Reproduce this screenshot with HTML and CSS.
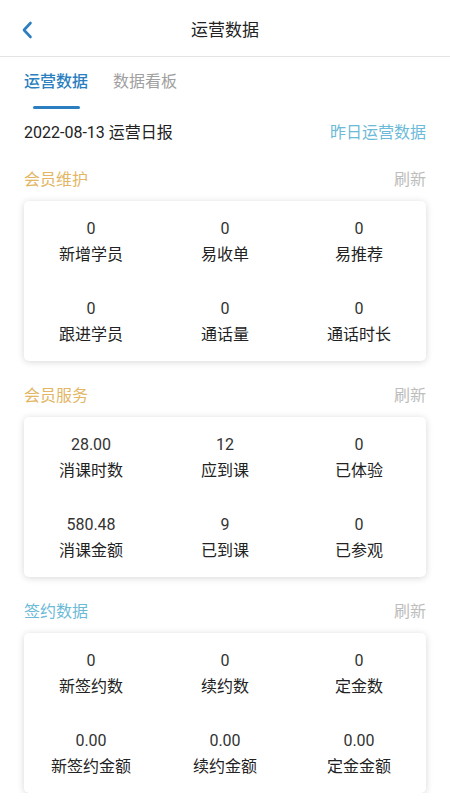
FILE: index.html
```html
<!DOCTYPE html>
<html lang="zh-CN">
<head>
    <meta charset="UTF-8">
    <meta name="viewport" content="width=device-width, initial-scale=1.0">
    <title>运营数据</title>
    <link rel="stylesheet" href="styles.css">
</head>
<body>
    <div class="navbar">
        <span class="back">
            <svg width="12" height="18" viewBox="0 0 12 18"><path d="M9.5 2 L3 9 L9.5 16" fill="none" stroke="#2b7fc0" stroke-width="2.6" stroke-linecap="round" stroke-linejoin="round"/></svg>
        </span>
        <span class="nav-title">运营数据</span>
    </div>

    <div class="page">
        <div class="tabs">
            <div class="tab active">运营数据</div>
            <div class="tab">数据看板</div>
        </div>

        <div class="date-row">
            <span class="date">2022-08-13 运营日报</span>
            <span class="yesterday">昨日运营数据</span>
        </div>

        <!-- 会员维护 -->
        <div class="section">
            <div class="section-head">
                <span class="section-title gold">会员维护</span>
                <span class="refresh">刷新</span>
            </div>
            <div class="card">
                <div class="item"><div class="num">0</div><div class="label">新增学员</div></div>
                <div class="item"><div class="num">0</div><div class="label">易收单</div></div>
                <div class="item"><div class="num">0</div><div class="label">易推荐</div></div>
                <div class="item"><div class="num">0</div><div class="label">跟进学员</div></div>
                <div class="item"><div class="num">0</div><div class="label">通话量</div></div>
                <div class="item"><div class="num">0</div><div class="label">通话时长</div></div>
            </div>
        </div>

        <!-- 会员服务 -->
        <div class="section">
            <div class="section-head">
                <span class="section-title gold">会员服务</span>
                <span class="refresh">刷新</span>
            </div>
            <div class="card">
                <div class="item"><div class="num">28.00</div><div class="label">消课时数</div></div>
                <div class="item"><div class="num">12</div><div class="label">应到课</div></div>
                <div class="item"><div class="num">0</div><div class="label">已体验</div></div>
                <div class="item"><div class="num">580.48</div><div class="label">消课金额</div></div>
                <div class="item"><div class="num">9</div><div class="label">已到课</div></div>
                <div class="item"><div class="num">0</div><div class="label">已参观</div></div>
            </div>
        </div>

        <!-- 签约数据 -->
        <div class="section">
            <div class="section-head">
                <span class="section-title blue">签约数据</span>
                <span class="refresh">刷新</span>
            </div>
            <div class="card">
                <div class="item"><div class="num">0</div><div class="label">新签约数</div></div>
                <div class="item"><div class="num">0</div><div class="label">续约数</div></div>
                <div class="item"><div class="num">0</div><div class="label">定金数</div></div>
                <div class="item"><div class="num">0.00</div><div class="label">新签约金额</div></div>
                <div class="item"><div class="num">0.00</div><div class="label">续约金额</div></div>
                <div class="item"><div class="num">0.00</div><div class="label">定金金额</div></div>
            </div>
        </div>
    </div>
</body>
</html>
```

FILE: styles.css
```css
body {
    margin: 0;
    background-color: #fff;
    font-family: Roboto, "Noto Sans CJK SC", sans-serif;
    color: #333;
}

.navbar {
    height: 56px;
    border-bottom: 1px solid #e3e3e3;
    display: flex;
    align-items: center;
    justify-content: center;
    position: relative;
}

.back {
    position: absolute;
    left: 21px;
    top: 21px;
    display: flex;
}

.nav-title {
    font-size: 17px;
    color: #222;
}

.page {
    padding: 0 24px;
}

.tabs {
    display: flex;
    gap: 25px;
}

.tab {
    font-size: 16px;
    line-height: 24px;
    padding-top: 13px;
    color: #a0a0a0;
    height: 52px;
    box-sizing: border-box;
    position: relative;
}

.tab.active {
    color: #2b7fc0;
    font-weight: 500;
}

.tab.active::after {
    content: "";
    position: absolute;
    left: 9px;
    right: 8px;
    bottom: 0;
    height: 3px;
    border-radius: 2px;
    background-color: #2b7fc0;
}

.date-row {
    display: flex;
    justify-content: space-between;
    margin-top: 12px;
    font-size: 16px;
    line-height: 24px;
}

.date {
    color: #222;
}

.yesterday {
    color: #6cbad8;
}

.section {
    margin-top: 23px;
}

.section:first-of-type {
    margin-top: 22px;
}

.section-head {
    display: flex;
    justify-content: space-between;
    font-size: 16px;
    line-height: 24px;
    margin-bottom: 9px;
}

.gold {
    color: #e3b666;
}

.blue {
    color: #6cbad8;
}

.refresh {
    color: #bdbdbd;
}

.card {
    background-color: #fff;
    border-radius: 5px;
    box-shadow: 0 1px 7px rgba(0, 0, 0, 0.16);
    display: grid;
    grid-template-columns: repeat(3, 1fr);
    row-gap: 32px;
    padding: 18px 0 14px;
}

.item {
    text-align: center;
}

.num {
    font-size: 16px;
    line-height: 20px;
    color: #333;
}

.label {
    font-size: 16px;
    line-height: 24px;
    margin-top: 4px;
    color: #222;
}
```
